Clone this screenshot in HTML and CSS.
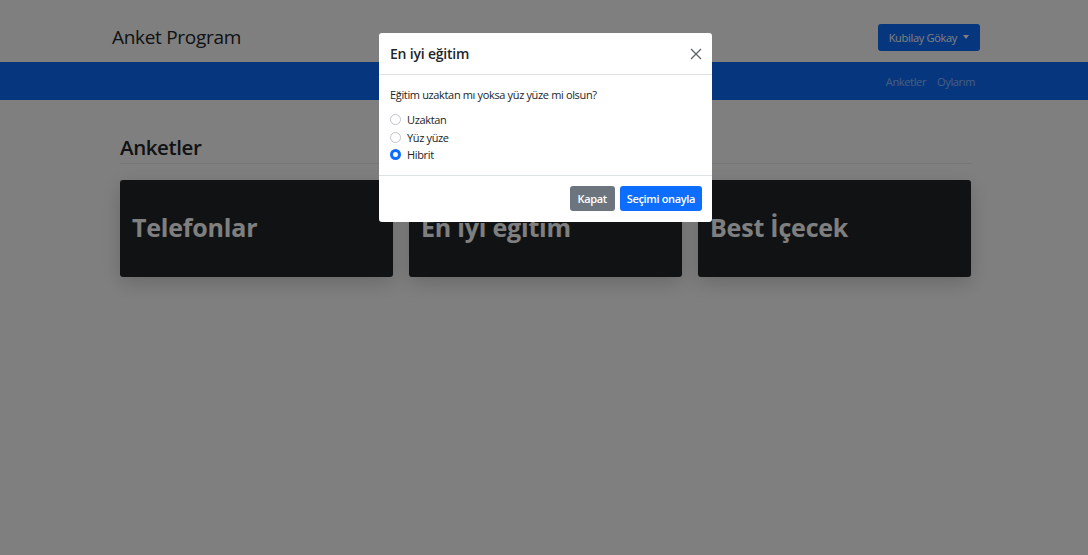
FILE: index.html
```html
<!DOCTYPE html>
<html lang="tr">
<head>
<meta charset="utf-8">
<title>Anket Program</title>
<link rel="stylesheet" href="styles.css">
</head>
<body>
<header class="topbar">
  <div class="topbar-inner">
    <div class="brand">Anket Program</div>
    <button class="user-btn">Kubilay Gökay <span class="caret"></span></button>
  </div>
</header>
<nav class="navstrip">
  <div class="navstrip-inner">
    <a class="nav-link">Anketler</a>
    <a class="nav-link">Oylarım</a>
  </div>
</nav>
<main class="content">
  <h3 class="section-title">Anketler</h3>
  <div class="cards">
    <div class="card"><h2 class="card-title">Telefonlar</h2></div>
    <div class="card"><h2 class="card-title">En iyi eğitim</h2></div>
    <div class="card"><h2 class="card-title">Best İçecek</h2></div>
  </div>
</main>
<div class="backdrop"></div>
<div class="modal">
  <div class="modal-header">
    <h5 class="modal-title">En iyi eğitim</h5>
    <button class="close-btn" aria-label="Kapat">
      <svg width="12" height="12" viewBox="0 0 12 12"><path d="M1 1L11 11M11 1L1 11" stroke="#5f6368" stroke-width="1.3" fill="none"/></svg>
    </button>
  </div>
  <div class="modal-body">
    <p class="question">Eğitim uzaktan mı yoksa yüz yüze mi olsun?</p>
    <label class="radio"><span class="dot"></span>Uzaktan</label>
    <label class="radio"><span class="dot"></span>Yüz yüze</label>
    <label class="radio"><span class="dot checked"></span>Hibrit</label>
  </div>
  <div class="modal-footer">
    <button class="btn btn-gray">Kapat</button>
    <button class="btn btn-blue">Seçimi onayla</button>
  </div>
</div>
</body>
</html>
```
FILE: styles.css
```css
* { box-sizing: border-box; }
html, body { margin: 0; padding: 0; }
body {
  font-family: "Open Sans", "Noto Sans", sans-serif;
  background: #ffffff;
  color: #212529;
  width: 1088px;
  height: 555px;
  overflow: hidden;
}
.topbar { height: 62px; background: #fff; }
.topbar-inner {
  display: flex;
  align-items: center;
  justify-content: space-between;
  height: 100%;
  padding: 0 108px 0 112px;
}
.brand { font-size: 19px; font-weight: 500; letter-spacing: -0.3px; margin-top: 12px; }
.user-btn {
  font-family: inherit;
  background: #0d6efd;
  color: #fff;
  border: 0;
  border-radius: 3px;
  height: 27px;
  padding: 0 11px;
  font-size: 11px;
  letter-spacing: -0.3px;
  display: flex;
  align-items: center;
  gap: 6px;
  margin-top: 12px;
}
.caret {
  width: 0; height: 0;
  border-left: 3.5px solid transparent;
  border-right: 3.5px solid transparent;
  border-top: 4px solid #fff;
}
.navstrip { height: 38px; background: #0d6efd; }
.navstrip-inner {
  display: flex;
  justify-content: flex-end;
  align-items: center;
  height: 100%;
  gap: 11px;
  padding-right: 113px;
}
.nav-link { color: rgba(255,255,255,0.55); font-size: 11px; letter-spacing: -0.35px; }
.content { padding: 30px 116px 0 120px; }
.section-title {
  margin: 0;
  font-size: 20.5px;
  font-weight: 600;
  letter-spacing: -0.4px;
  height: 34px;
  padding-top: 3px;
  border-bottom: 1px solid #eceff1;
}
.cards {
  display: grid;
  grid-template-columns: repeat(3, 273px);
  gap: 16px;
  margin-top: 16px;
}
.card {
  height: 97px;
  background: #212529;
  border-radius: 3px;
  display: flex;
  align-items: center;
  padding: 0 12px 3px;
  box-shadow: 0 6px 20px rgba(0,0,0,0.18);
}
.card-title {
  margin: 0;
  color: #fff;
  font-size: 25px;
  font-weight: 700;
  letter-spacing: -0.2px;
}
.backdrop {
  position: fixed;
  inset: 0;
  background: rgba(0,0,0,0.5);
}
.modal {
  position: absolute;
  left: 379px;
  top: 33px;
  width: 333px;
  background: #fff;
  border-radius: 3px;
  font-size: 11px;
  letter-spacing: -0.35px;
}
.modal-header {
  height: 42px;
  display: flex;
  align-items: center;
  justify-content: space-between;
  padding: 0 10px 0 11px;
  border-bottom: 1px solid #dee2e6;
}
.modal-title { margin: 0; font-size: 14px; font-weight: 600; letter-spacing: -0.2px; }
.close-btn { background: none; border: 0; padding: 0; display: flex; }
.modal-body { padding: 12px 11px 11px; }
.question { margin: 0 0 9px; }
.radio { display: flex; align-items: center; gap: 6px; height: 17.5px; }
.dot {
  width: 11px; height: 11px;
  border-radius: 50%;
  border: 1px solid #bfc4c9;
  background: #fff;
}
.dot.checked { border: 3px solid #0d6efd; }
.modal-footer {
  display: flex;
  justify-content: flex-end;
  gap: 5px;
  padding: 10px 10px 11px;
  border-top: 1px solid #dee2e6;
}
.btn {
  font-family: inherit;
  font-size: 11px;
  font-weight: 600;
  letter-spacing: -0.35px;
  color: #fff;
  border: 0;
  border-radius: 3px;
  height: 25px;
  padding: 0 8px;
}
.btn-gray { background: #6c757d; }
.btn-blue { background: #0d6efd; padding: 0 7px; }
```
